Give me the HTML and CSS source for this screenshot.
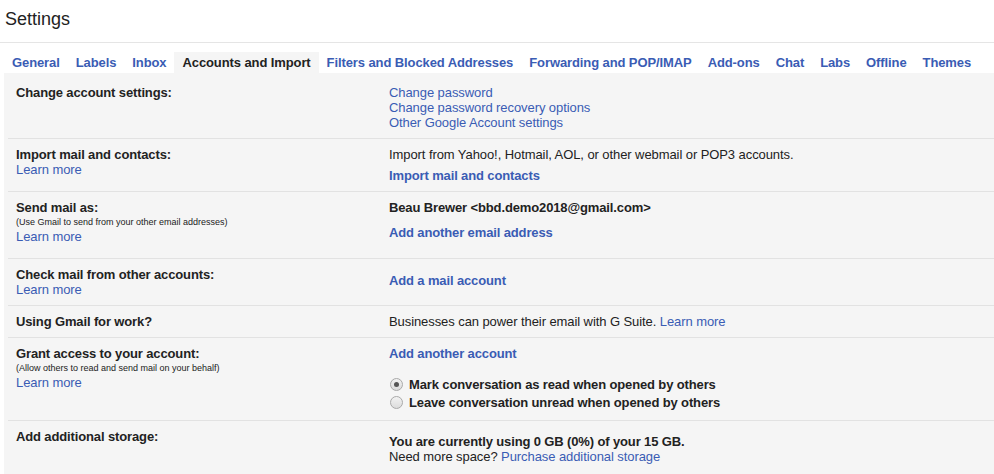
FILE: index.html
```html
<!DOCTYPE html>
<html lang="en">
<head>
<meta charset="utf-8">
<title>Settings</title>
<link rel="stylesheet" href="styles.css">
</head>
<body>
<header class="header">
  <h1 class="title">Settings</h1>
</header>
<nav class="tabs">
  <a class="tab">General</a>
  <a class="tab">Labels</a>
  <a class="tab">Inbox</a>
  <a class="tab active">Accounts and Import</a>
  <a class="tab">Filters and Blocked Addresses</a>
  <a class="tab">Forwarding and POP/IMAP</a>
  <a class="tab">Add-ons</a>
  <a class="tab">Chat</a>
  <a class="tab">Labs</a>
  <a class="tab">Offline</a>
  <a class="tab">Themes</a>
</nav>
<main class="panel">
  <section class="row">
    <div class="label"><div class="label-title">Change account settings:</div></div>
    <div class="value">
      <a class="link">Change password</a>
      <a class="link">Change password recovery options</a>
      <a class="link">Other Google Account settings</a>
    </div>
  </section>
  <section class="row">
    <div class="label">
      <div class="label-title">Import mail and contacts:</div>
      <a class="link">Learn more</a>
    </div>
    <div class="value">
      <div class="text">Import from Yahoo!, Hotmail, AOL, or other webmail or POP3 accounts.</div>
      <a class="link bold gap-6">Import mail and contacts</a>
    </div>
  </section>
  <section class="row row-tall">
    <div class="label">
      <div class="label-title">Send mail as:</div>
      <div class="note">(Use Gmail to send from your other email addresses)</div>
      <a class="link">Learn more</a>
    </div>
    <div class="value">
      <div class="text bold">Beau Brewer &lt;bbd.demo2018@gmail.com&gt;</div>
      <a class="link bold gap-10">Add another email address</a>
    </div>
  </section>
  <section class="row">
    <div class="label">
      <div class="label-title">Check mail from other accounts:</div>
      <a class="link">Learn more</a>
    </div>
    <div class="value">
      <a class="link bold gap-6">Add a mail account</a>
    </div>
  </section>
  <section class="row">
    <div class="label"><div class="label-title">Using Gmail for work?</div></div>
    <div class="value">
      <div class="text">Businesses can power their email with G Suite. <a class="link inline">Learn more</a></div>
    </div>
  </section>
  <section class="row row-radios">
    <div class="label">
      <div class="label-title">Grant access to your account:</div>
      <div class="note">(Allow others to read and send mail on your behalf)</div>
      <a class="link">Learn more</a>
    </div>
    <div class="value">
      <a class="link bold">Add another account</a>
      <div class="radios">
        <div class="radio-row"><span class="radio checked"></span><span class="radio-label">Mark conversation as read when opened by others</span></div>
        <div class="radio-row"><span class="radio"></span><span class="radio-label">Leave conversation unread when opened by others</span></div>
      </div>
    </div>
  </section>
  <section class="row last">
    <div class="label"><div class="label-title">Add additional storage:</div></div>
    <div class="value">
      <div class="text bold gap-5">You are currently using 0 GB (0%) of your 15 GB.</div>
      <div class="text">Need more space? <a class="link inline">Purchase additional storage</a></div>
    </div>
  </section>
</main>
</body>
</html>
```

FILE: styles.css
```css
* { box-sizing: border-box; }

html, body {
  margin: 0;
  padding: 0;
  background: #ffffff;
}

body {
  font-family: "Liberation Sans", Arial, sans-serif;
  font-size: 13px;
  line-height: 15px;
  letter-spacing: -0.08px;
  color: #222222;
  overflow: hidden;
}

.header {
  padding: 9px 0 12px 5px;
  border-bottom: 1px solid #e5e5e5;
}

.title {
  margin: 0;
  font-size: 18px;
  line-height: 21px;
  font-weight: normal;
  letter-spacing: 0;
  color: #222222;
}

.tabs {
  display: flex;
  margin-top: 9px;
  padding-left: 4px;
  white-space: nowrap;
}

.tab {
  padding: 3px 8px;
  font-weight: bold;
  letter-spacing: -0.1px;
  color: #3a5cb4;
  text-decoration: none;
}

.tab.active {
  color: #222222;
  background: #f5f5f5;
}

.panel {
  background: #f5f5f5;
  margin-left: 4px;
  padding: 4px 0 0 4px;
  min-height: 410px;
}

.row {
  display: grid;
  grid-template-columns: 373px 1fr;
  padding: 8px 0 8px 8px;
  border-bottom: 1px solid #e2e2e2;
}

.row.row-tall { padding-bottom: 14px; }
.row.row-radios { padding-bottom: 9px; }
.row.last { border-bottom: none; }

.label, .value {
  display: flex;
  flex-direction: column;
  align-items: flex-start;
}

.label-title {
  font-weight: bold;
  letter-spacing: -0.13px;
}

.note {
  font-size: 9px;
  line-height: 14px;
  letter-spacing: 0;
  color: #222222;
}

.link {
  display: block;
  color: #3a5cb4;
  text-decoration: none;
  white-space: nowrap;
}

.link.inline { display: inline; }

.bold {
  font-weight: bold;
  letter-spacing: -0.13px;
}

.text { white-space: nowrap; }

.gap-5 { margin-top: 5px; }
.gap-6 { margin-top: 6px; }
.gap-10 { margin-top: 10px; }

.radios {
  margin-top: 14px;
  display: flex;
  flex-direction: column;
}

.radio-row {
  display: flex;
  align-items: center;
  height: 18px;
}

.radio {
  width: 13px;
  height: 13px;
  border-radius: 50%;
  border: 1px solid #a9a9a9;
  background: linear-gradient(#f2f2f2, #dcdcdc);
  margin: 0 6px 0 1px;
  position: relative;
  flex: none;
}

.radio.checked::after {
  content: "";
  position: absolute;
  left: 3px;
  top: 3px;
  width: 5px;
  height: 5px;
  border-radius: 50%;
  background: #555555;
}

.radio-label {
  font-weight: bold;
  letter-spacing: -0.13px;
}
```
